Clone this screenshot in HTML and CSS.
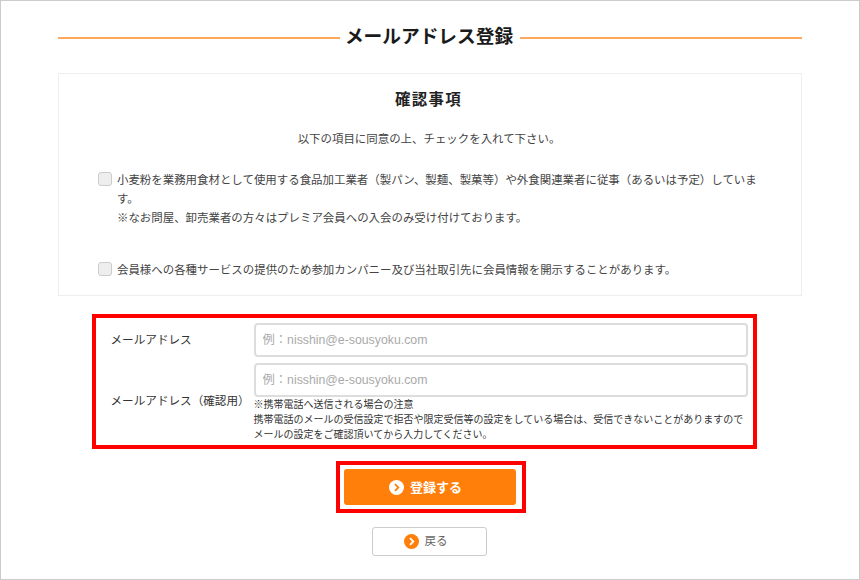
FILE: index.html
```html
<!DOCTYPE html>
<html lang="ja">
<head>
<meta charset="utf-8">
<title>メールアドレス登録</title>
<link rel="stylesheet" href="styles.css">
</head>
<body>
<main class="page">
  <h1 class="title">メールアドレス登録</h1>
  <section class="card">
    <h2 class="card-title">確認事項</h2>
    <p class="lead">以下の項目に同意の上、チェックを入れて下さい。</p>
    <label class="check first">
      <input type="checkbox" class="box">
      <span>小麦粉を業務用食材として使用する食品加工業者（製パン、製麺、製菓等）や外食関連業者に従事（あるいは予定）しています。<br>※なお問屋、卸売業者の方々はプレミア会員への入会のみ受け付けております。</span>
    </label>
    <label class="check second">
      <input type="checkbox" class="box">
      <span>会員様への各種サービスの提供のため参加カンパニー及び当社取引先に会員情報を開示することがあります。</span>
    </label>
  </section>
  <form class="form-box">
    <div class="form-row">
      <label class="form-label">メールアドレス</label>
      <div class="form-field"><input class="text-input" type="text" placeholder="例：nisshin@e-sousyoku.com"></div>
    </div>
    <div class="form-row second-row">
      <label class="form-label confirm">メールアドレス（確認用）</label>
      <div class="form-field">
        <input class="text-input" type="text" placeholder="例：nisshin@e-sousyoku.com">
        <p class="note">※携帯電話へ送信される場合の注意<br>携帯電話のメールの受信設定で拒否や限定受信等の設定をしている場合は、受信できないことがありますのでメールの設定をご確認頂いてから入力してください。</p>
      </div>
    </div>
  </form>
  <div class="submit-box">
    <button class="btn-submit" type="button">
      <svg class="icon" viewBox="0 0 15 15" width="15" height="15"><circle cx="7.5" cy="7.5" r="7.5" fill="#fff"/><path d="M6 4.2 9.3 7.5 6 10.8" fill="none" stroke="#ff7f0a" stroke-width="1.8"/></svg>
      <span class="btn-text">登録する</span>
    </button>
  </div>
  <button class="btn-back" type="button">
    <svg class="icon" viewBox="0 0 15 15" width="15" height="15"><circle cx="7.5" cy="7.5" r="7.5" fill="#ff7f0a"/><path d="M6 4.2 9.3 7.5 6 10.8" fill="none" stroke="#fff" stroke-width="1.8"/></svg>
    <span class="btn-text">戻る</span>
  </button>
</main>
</body>
</html>
```
FILE: styles.css
```css
* { box-sizing: border-box; }
html, body { margin: 0; padding: 0; background: #fff; }
body {
  font-family: "Noto Sans CJK JP", "Noto Sans", sans-serif;
  color: #444;
}
.page {
  width: 860px;
  height: 580px;
  border: 1px solid #ccc;
  padding: 0 57px;
  display: flex;
  flex-direction: column;
  align-items: center;
  overflow: hidden;
}
.title {
  width: 100%;
  margin: 21px 0 0;
  height: 26px;
  display: flex;
  align-items: center;
  gap: 6px;
  font-size: 18.7px;
  line-height: 26px;
  font-weight: 700;
  color: #1a1a1a;
}
.title::before, .title::after {
  content: "";
  flex: 1;
  height: 2px;
  margin-top: 6px;
  background: #ffa75c;
}
.title::before { margin-right: -1px; }
.title::after { margin-left: 1px; }
.card {
  width: 100%;
  height: 223px;
  margin-top: 25px;
  border: 1px solid #eee;
  padding: 13px 39px 0;
}
.card-title {
  margin: 0;
  padding-right: 3px;
  font-size: 15.4px;
  line-height: 22px;
  letter-spacing: 1.4px;
  text-align: center;
  font-weight: 700;
  color: #222;
}
.lead {
  margin: 20px 0 0;
  padding-right: 2px;
  font-size: 11.45px;
  line-height: 18px;
  text-align: center;
}
.check {
  display: flex;
  align-items: flex-start;
  gap: 5px;
  margin-right: -12px;
  font-size: 11.45px;
  line-height: 19px;
}
.check.first { margin-top: 23px; }
.check.second { margin-top: 33px; }
.box {
  appearance: none;
  flex: none;
  width: 14px;
  height: 14px;
  margin: 2px 0 0;
  border: 1px solid #ccc;
  border-radius: 3px;
  background: #eee;
}
.form-box {
  width: 665px;
  height: 135px;
  margin: 18px 12px 0 0;
  border: 4px solid #f00;
  padding: 5px 5px 0 15px;
}
.form-row { display: flex; }
.second-row { margin-top: 6px; }
.form-label {
  width: 143px;
  flex: none;
  font-size: 11.6px;
  line-height: 32px;
  color: #333;
}
.form-label.confirm { padding-top: 21px; }
.form-field { flex: 1; }
.text-input {
  display: block;
  width: 100%;
  height: 34px;
  padding: 0 7px;
  border: 2px solid #ddd;
  border-radius: 4px;
  background: #fff;
  font-family: "Liberation Sans", "Noto Sans CJK JP", sans-serif;
  font-size: 12.3px;
  outline: none;
}
.text-input::placeholder { color: #aaa; opacity: 1; }
.note {
  margin: -1px 0 0;
  font-size: 10px;
  line-height: 15px;
  color: #333;
}
.submit-box {
  width: 190px;
  height: 52px;
  margin: 12px 0 0 2px;
  border: 4px solid #f00;
  padding: 4px 6px 4px 4px;
}
.btn-submit {
  width: 100%;
  height: 36px;
  padding: 0 9px 0 0;
  display: flex;
  align-items: center;
  justify-content: center;
  gap: 6px;
  border: 0;
  border-radius: 3px;
  background: #ff7f0a;
  color: #fff;
  font: 700 13px/1 "Noto Sans CJK JP", sans-serif;
}
.btn-back {
  width: 115px;
  height: 29px;
  margin: 14px 2px 0 0;
  padding: 0 7px 0 0;
  display: flex;
  align-items: center;
  justify-content: center;
  gap: 6px;
  border: 1px solid #ccc;
  border-radius: 3px;
  background: #fff;
  color: #666;
  font: 400 11.5px/1 "Noto Sans CJK JP", sans-serif;
}
.btn-text { margin-top: -2px; }
.icon { flex: none; }
```
